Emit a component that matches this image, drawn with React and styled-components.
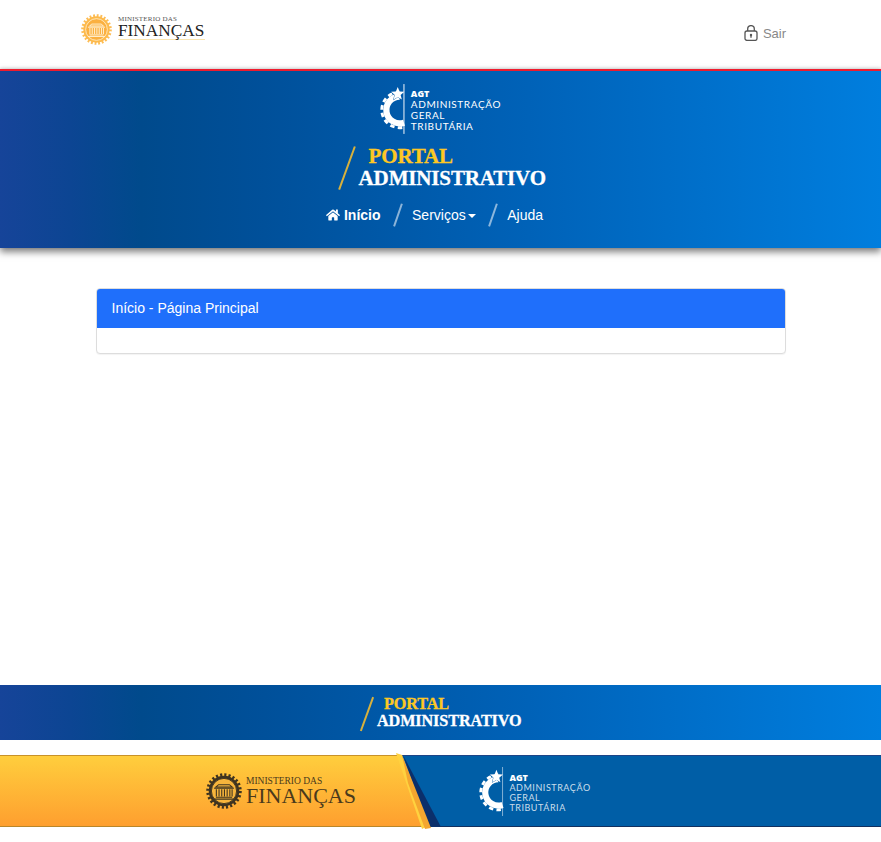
import React from "react";
import styled, { createGlobalStyle } from "styled-components";
import { FaHome } from "react-icons/fa";

const GlobalStyle = createGlobalStyle`
  html, body {
    margin: 0;
    padding: 0;
    background: #fff;
    font-family: "Liberation Sans", Arial, sans-serif;
    font-size: 14px;
  }
`;

const blueGradient = "linear-gradient(90deg, #164499 0%, #0c4593 8%, #004a8c 16%, #00509a 30%, #0062b8 60%, #007ede 100%)";

// coloured emblem of the ministry, a toothed ring with a small building inside
const MinistryEmblem = ({ size, ring, teeth, fill, line }) => (
  <svg width={size} height={size} viewBox="0 0 40 40">
    <circle cx="20" cy="20" r="18" fill="none" stroke={teeth} strokeWidth="3.500" strokeDasharray="2.4 2.3" />
    <circle cx="20" cy="20" r="17" fill={ring} />
    <circle cx="20" cy="20" r="14" fill={fill} stroke={line} strokeWidth="1" />
    <path d="M9 17h22M11 15.500h18l-3-2.500H14zM11 27h18M9 29h22" stroke={line} strokeWidth="1.200" fill="none" />
    <path d="M11.500 18v8M14.500 18v8M17.500 18v8M20.500 18v8M23.500 18v8M26.500 18v8M29 18v8" stroke={line} strokeWidth="1.200" />
  </svg>
);

const AgtMark = ({ height, faded }) => (
  <svg height={height} viewBox="0 0 28 52" style={{ display: "block" }}>
    <path d="M20.500 13A14 14 0 1 0 25 40.300" fill="none" stroke="#fff" strokeWidth="6.500" />
    <path
      d="M20.500 8.500A18.500 18.500 0 1 0 25 44.900"
      fill="none"
      stroke="#fff"
      strokeWidth="3"
      strokeDasharray="4.600 3.400"
    />
    <path
      d="M18.500 3l1.900 4.800 5 .2-3.900 3.300 1.300 4.900-4.300-2.800-4.300 2.800 1.300-4.900-3.900-3.300 5-.2z"
      fill="#fff"
      stroke="#0058a8"
      strokeWidth="0.800"
      paintOrder="stroke"
    />
    <path d="M25 0v52" stroke={faded ? "rgba(255,255,255,.55)" : "#fff"} strokeWidth="1" />
  </svg>
);

export default function App() {
  return (
    <>
      <GlobalStyle />
      <TopBar>
        <MinistryLogo>
          <MinistryEmblem size={31} ring="#fdb94a" teeth="#fdbd55" fill="#fbb040" line="#fff3d8" />
          <MinistryText>
            <MinistrySmall>MINISTERIO DAS</MinistrySmall>
            <MinistryBig>FINANÇAS</MinistryBig>
          </MinistryText>
        </MinistryLogo>
        <LogoutLink href="#">
          <svg width="14" height="16" viewBox="0 0 14 16" fill="none" stroke="#555" strokeWidth="1.300">
            <rect x="1" y="6" width="12" height="9.400" rx="2" />
            <path d="M3.700 6V3.900a3.300 3.300 0 0 1 6.600 0V6" />
            <circle cx="7" cy="10" r="1.200" fill="#555" stroke="none" />
            <path d="M7 10.300v2.500" />
          </svg>
          Sair
        </LogoutLink>
      </TopBar>

      <Hero>
        <AgtLogo>
          <AgtMark height={52} />
          <AgtText>
            <AgtTitle>AGT</AgtTitle>
            <AgtLine>ADMINISTRAÇÃO</AgtLine>
            <AgtLine>GERAL</AgtLine>
            <AgtLine>TRIBUTÁRIA</AgtLine>
          </AgtText>
        </AgtLogo>
        <PortalTitle>
          <PortalSlash />
          <PortalWords>
            <PortalGold>PORTAL</PortalGold>
            <PortalWhite>ADMINISTRATIVO</PortalWhite>
          </PortalWords>
        </PortalTitle>
        <Nav>
          <NavLink href="#" $active>
            <FaHome size={14} />
            Início
          </NavLink>
          <NavSlash />
          <NavLink href="#">
            Serviços
            <Caret />
          </NavLink>
          <NavSlash />
          <NavLink href="#">Ajuda</NavLink>
        </Nav>
      </Hero>

      <Main>
        <Panel>
          <PanelHeading>Início - Página Principal</PanelHeading>
          <PanelBody />
        </Panel>
      </Main>

      <FooterPortal>
        <PortalTitle $small>
          <PortalSlash $small />
          <PortalWords $small>
            <PortalGold $small>PORTAL</PortalGold>
            <PortalWhite $small>ADMINISTRATIVO</PortalWhite>
          </PortalWords>
        </PortalTitle>
      </FooterPortal>

      <FooterBand>
        <GoldSide>
          <MinistryEmblem size={36} ring="#3f3420" teeth="#3f3420" fill="#f7b53c" line="#3f3420" />
          <FooterMinistryText>
            <FooterMinistrySmall>MINISTERIO DAS</FooterMinistrySmall>
            <FooterMinistryBig>FINANÇAS</FooterMinistryBig>
          </FooterMinistryText>
        </GoldSide>
        <BlueSide>
          <AgtMark height={49} faded />
          <AgtText $footer>
            <AgtTitle>AGT</AgtTitle>
            <AgtLine $footer>ADMINISTRAÇÃO</AgtLine>
            <AgtLine $footer>GERAL</AgtLine>
            <AgtLine $footer>TRIBUTÁRIA</AgtLine>
          </AgtText>
        </BlueSide>
        <Ribbon width="46" height="78" viewBox="0 0 46 78">
          <path d="M8 2 46 74H33z" fill="#0b2f6b" />
          <path d="M1 0 7 2 33 73 27 76z" fill="#ffd23f" />
          <path d="M7 2 36 75 30 76 13 30z" fill="#f4a62f" />
        </Ribbon>
      </FooterBand>
      <PageEnd />
    </>
  );
}

const TopBar = styled.header`
  display: flex;
  justify-content: space-between;
  align-items: flex-start;
  box-sizing: border-box;
  height: 69px;
  padding: 14px 95px 0 81px;
  background: #fff;
`;

const MinistryLogo = styled.div`
  display: flex;
  align-items: flex-start;
  gap: 6px;
`;

const MinistryText = styled.div`
  display: flex;
  flex-direction: column;
  padding-top: 2px;
  color: #222;
  font-family: "Liberation Serif", "Times New Roman", serif;
`;

const MinistrySmall = styled.span`
  font-size: 7px;
  line-height: 7px;
  letter-spacing: 0.2px;
  color: #555;
`;

const MinistryBig = styled.span`
  width: 87px;
  font-size: 17.300px;
  line-height: 15px;
  padding-bottom: 1px;
  border-bottom: 1px solid #f8e4b0;
  white-space: nowrap;
`;

const LogoutLink = styled.a`
  display: flex;
  align-items: center;
  gap: 5px;
  margin-top: 11px;
  color: #888;
  font-size: 13px;
  text-decoration: none;
`;

const Hero = styled.section`
  position: relative;
  z-index: 1;
  display: flex;
  flex-direction: column;
  align-items: center;
  box-sizing: border-box;
  height: 179px;
  padding-top: 12px;
  border-top: 2px solid #ee1c2e;
  background: ${blueGradient};
  box-shadow: 0 4px 7px rgba(0, 0, 0, 0.5), 0 -1px 3px rgba(0, 0, 0, 0.15);
`;

const AgtLogo = styled.div`
  display: flex;
  gap: 4px;
  width: 121px;
`;

const AgtText = styled.div`
  display: flex;
  flex-direction: column;
  padding-top: ${(p) => (p.$footer ? "3px" : "5px")};
  color: #fff;
`;

const AgtTitle = styled.span`
  font-family: "Open Sans", sans-serif;
  font-size: 9px;
  font-weight: 800;
  line-height: 11px;
`;

const AgtLine = styled.span`
  font-family: "Lato", sans-serif;
  font-size: ${(p) => (p.$footer ? "9px" : "10px")};
  line-height: ${(p) => (p.$footer ? "10px" : "11px")};
  letter-spacing: ${(p) => (p.$footer ? "0.55px" : "0.6px")};
  color: ${(p) => (p.$footer ? "rgba(255,255,255,.8)" : "#fff")};
  white-space: nowrap;
`;

const PortalTitle = styled.div`
  display: flex;
  align-items: flex-start;
  margin-top: ${(p) => (p.$small ? "0" : "10px")};
  margin-left: ${(p) => (p.$small ? "0" : "3px")};
`;

const PortalSlash = styled.i`
  display: block;
  width: 1.500px;
  height: ${(p) => (p.$small ? "36px" : "46px")};
  margin: ${(p) => (p.$small ? "0 9px 0 7px" : "0 11px 0 8px")};
  background: #d8b13c;
  transform: rotate(20deg);
`;

const PortalWords = styled.div`
  display: flex;
  flex-direction: column;
  font-family: "Liberation Serif", "Times New Roman", serif;
  font-weight: 700;
  letter-spacing: ${(p) => (p.$small ? "-0.1px" : "-0.15px")};
  -webkit-text-stroke: 0.3px currentColor;
`;

const PortalGold = styled.span`
  margin-left: ${(p) => (p.$small ? "7px" : "10px")};
  color: #fdc823;
  font-size: ${(p) => (p.$small ? "16.200px" : "21px")};
  line-height: ${(p) => (p.$small ? "17px" : "22px")};
`;

const PortalWhite = styled.span`
  color: #fff;
  font-size: ${(p) => (p.$small ? "16.200px" : "21px")};
  line-height: ${(p) => (p.$small ? "17px" : "23px")};
  white-space: nowrap;
`;

const Nav = styled.nav`
  display: flex;
  align-items: center;
  margin-top: 12px;
  margin-left: -12px;
`;

const NavLink = styled.a`
  display: flex;
  align-items: center;
  gap: ${(p) => (p.$active ? "4px" : "2px")};
  color: #fff;
  font-size: 14px;
  font-weight: ${(p) => (p.$active ? 700 : 400)};
  line-height: 20px;
  text-decoration: none;
`;

const NavSlash = styled.i`
  display: block;
  width: 1.500px;
  height: 24px;
  margin: 0 14px 0 16px;
  background: rgba(255, 255, 255, 0.55);
  transform: rotate(19deg);
`;

const Caret = styled.i`
  display: block;
  width: 0;
  height: 0;
  margin-top: 1px;
  border-top: 4px solid #fff;
  border-left: 4px solid transparent;
  border-right: 4px solid transparent;
`;

const Main = styled.main`
  box-sizing: border-box;
  height: 437px;
  padding-top: 40px;
`;

const Panel = styled.div`
  box-sizing: border-box;
  width: 690px;
  margin: 0 auto;
  border: 1px solid #ddd;
  border-radius: 4px;
  box-shadow: 0 1px 1px rgba(0, 0, 0, 0.05);
  background: #fff;
`;

const PanelHeading = styled.div`
  box-sizing: border-box;
  height: 39px;
  padding: 9px 15px;
  color: #fff;
  font-size: 14px;
  line-height: 20px;
  background: #1f6ffb;
  border-radius: 3px 3px 0 0;
`;

const PanelBody = styled.div`
  height: 25px;
`;

const FooterPortal = styled.div`
  display: flex;
  justify-content: center;
  box-sizing: border-box;
  height: 55px;
  padding: 11px 0 0 0;
  background: ${blueGradient};
`;

const FooterBand = styled.div`
  position: relative;
  display: flex;
  height: 72px;
  margin-top: 15px;
`;

const GoldSide = styled.div`
  display: flex;
  align-items: center;
  justify-content: flex-end;
  gap: 4px;
  box-sizing: border-box;
  width: 430px;
  padding-right: 74px;
  border-top: 1px solid #c8922a;
  border-bottom: 1px solid #b9862a;
  background: linear-gradient(180deg, #ffce3d 0%, #fe9f2f 100%);
  clip-path: polygon(0 0, 398px 0, 430px 100%, 0 100%);
`;

const BlueSide = styled.div`
  flex: 1;
  display: flex;
  align-items: center;
  gap: 4px;
  box-sizing: border-box;
  margin-left: -30px;
  padding-left: 79px;
  border-top: 1px solid #1d4487;
  border-bottom: 1px solid #12305f;
  background: #005ea6;
`;

const FooterMinistryText = styled.div`
  display: flex;
  flex-direction: column;
  color: #4a3a1c;
  font-family: "Liberation Serif", "Times New Roman", serif;
`;

const FooterMinistrySmall = styled.span`
  font-size: 9.500px;
  line-height: 10px;
`;

const FooterMinistryBig = styled.span`
  font-size: 22px;
  line-height: 20px;
  white-space: nowrap;
`;

const Ribbon = styled.svg`
  position: absolute;
  left: 395px;
  top: -2px;
`;

const PageEnd = styled.div`
  height: 15px;
`;
